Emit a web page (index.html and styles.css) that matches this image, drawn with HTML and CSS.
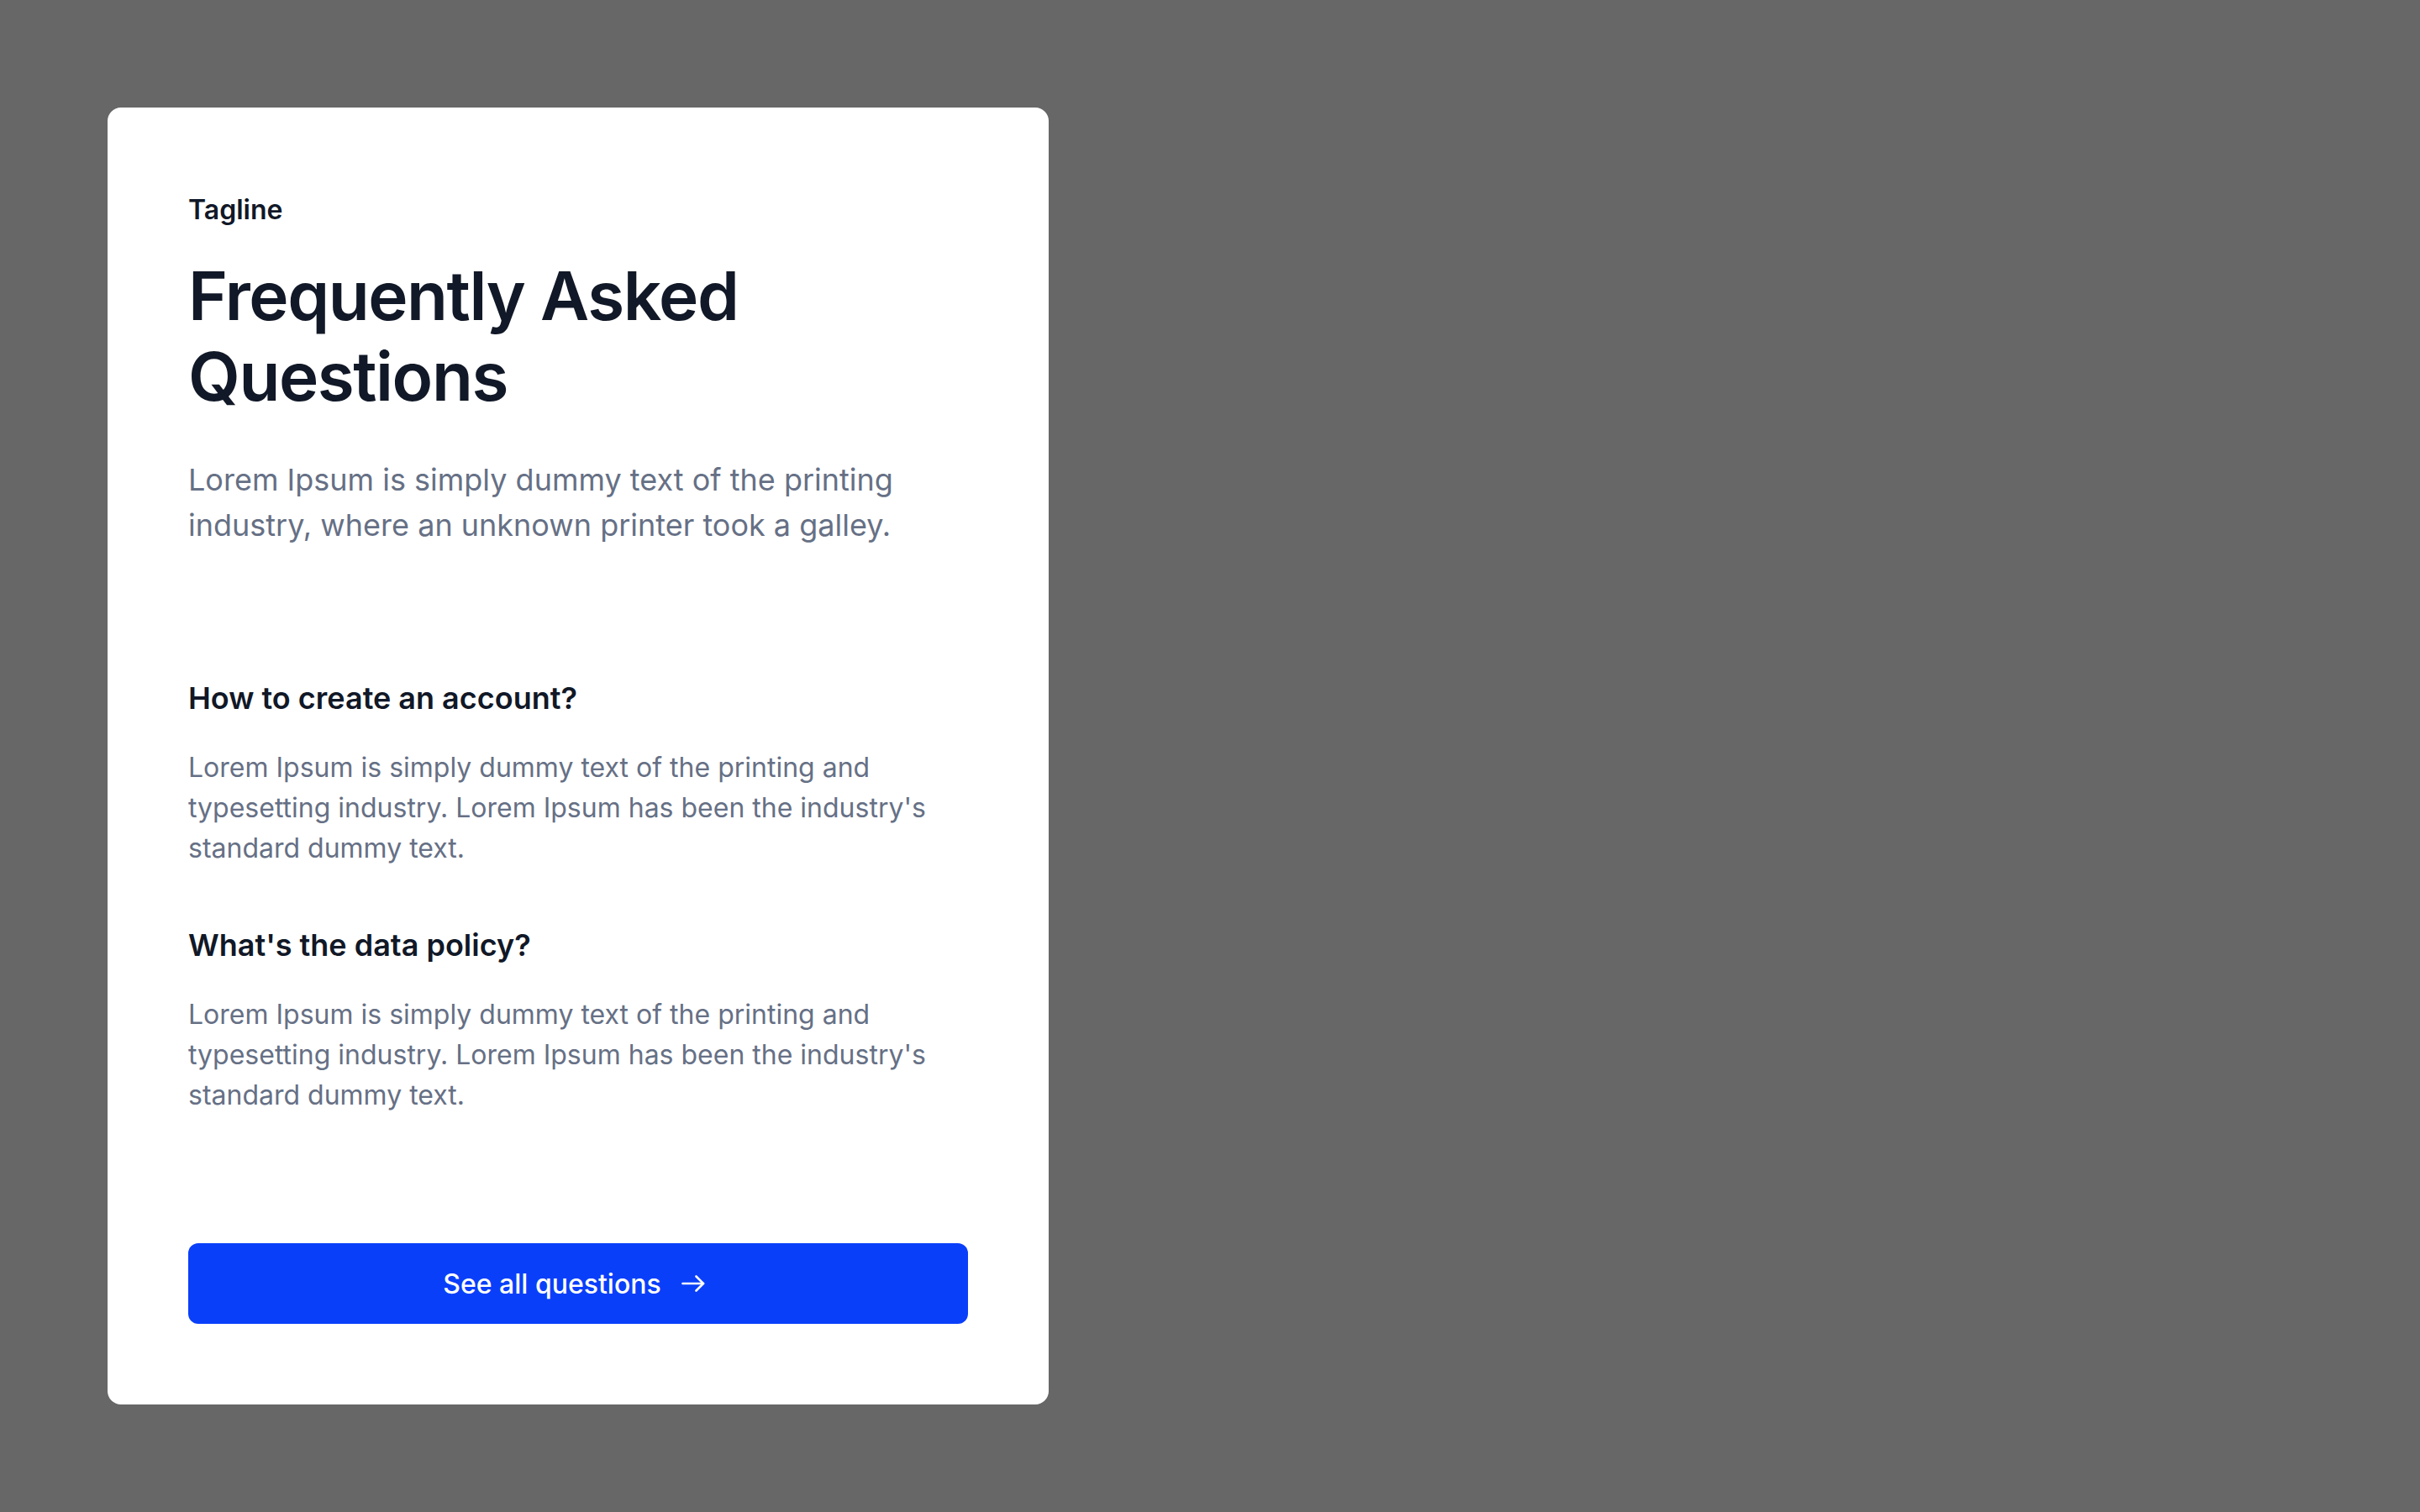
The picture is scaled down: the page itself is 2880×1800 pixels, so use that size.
FILE: index.html
```html
<!DOCTYPE html>
<html lang="en">
<head>
    <meta charset="UTF-8">
    <meta name="viewport" content="width=device-width, initial-scale=1.0">
    <title>Frequently Asked Questions</title>
    <link rel="stylesheet" href="styles.css">
</head>
<body>
    <div class="card">
        <div class="intro">
            <div class="tagline">Tagline</div>
            <h1>Frequently Asked Questions</h1>
            <p class="lead">Lorem Ipsum is simply dummy text of the printing industry, where an unknown printer took a galley.</p>
        </div>

        <div class="faq-list">
            <div class="faq-item">
                <h3>How to create an account?</h3>
                <p>Lorem Ipsum is simply dummy text of the printing and typesetting industry. Lorem Ipsum has been the industry's standard dummy text.</p>
            </div>
            <div class="faq-item">
                <h3>What's the data policy?</h3>
                <p>Lorem Ipsum is simply dummy text of the printing and typesetting industry. Lorem Ipsum has been the industry's standard dummy text.</p>
            </div>
        </div>

        <button class="see-all">
            See all questions
            <svg class="arrow" width="28" height="20" viewBox="0 0 28 20" fill="none" stroke="currentColor" stroke-width="2.6" stroke-linecap="round" stroke-linejoin="round">
                <path d="M1.5 10H26"/>
                <path d="M17.5 1.5L26 10L17.5 18.5"/>
            </svg>
        </button>
    </div>
</body>
</html>
```

FILE: styles.css
```css
body {
    margin: 0;
    padding: 128px;
    min-height: 100vh;
    box-sizing: border-box;
    background: #676767;
    font-family: 'Inter', 'Noto Sans', sans-serif;
    color: #111827;
}
.card {
    width: 1120px;
    box-sizing: border-box;
    padding: 96px;
    background: #ffffff;
    border-radius: 16px;
    display: flex;
    flex-direction: column;
    gap: 152px;
}
.intro {
    display: flex;
    flex-direction: column;
}
.tagline {
    margin-top: 2px;
    font-size: 32px;
    line-height: 48px;
    font-weight: 600;
}
h1 {
    margin: 30px 0 0;
    font-size: 80px;
    line-height: 96px;
    font-weight: 600;
    letter-spacing: -0.018em;
}
.lead {
    margin: 48px 0 0;
    font-size: 36px;
    line-height: 54px;
    color: #667085;
}
.faq-list {
    display: flex;
    flex-direction: column;
    gap: 64px;
}
.faq-item h3 {
    margin: 0;
    font-size: 36px;
    line-height: 54px;
    font-weight: 600;
}
.faq-item p {
    margin: 32px 0 0;
    font-size: 32px;
    line-height: 48px;
    color: #667085;
}
.see-all {
    height: 96px;
    border: none;
    border-radius: 12px;
    background: #0a3ffa;
    color: #ffffff;
    font-family: inherit;
    font-size: 32px;
    font-weight: 500;
    display: flex;
    align-items: center;
    justify-content: center;
    gap: 24px;
    cursor: pointer;
}
.arrow {
    display: block;
    margin-right: 10px;
}
```
